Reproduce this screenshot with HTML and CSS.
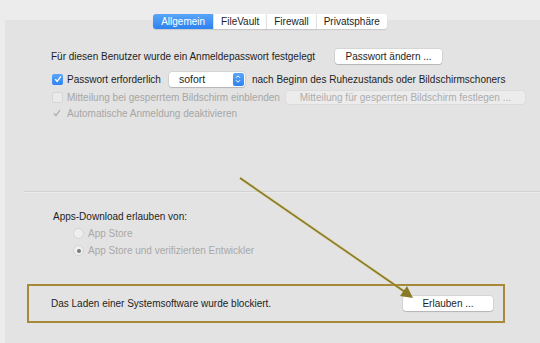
FILE: index.html
```html
<!DOCTYPE html>
<html>
	<head>
		<meta charset="utf-8">
		<title>Sicherheit</title>
		<link rel="stylesheet" href="styles.css">
	</head>
	<body>
		<div class="tabs">
			<div class="tab current">Allgemein</div>
			<div class="tab">FileVault</div>
			<div class="tab">Firewall</div>
			<div class="tab">Privatsphäre</div>
		</div>
		<div class="panel">
			<div class="row row-first">
				<span>Für diesen Benutzer wurde ein Anmeldepasswort festgelegt</span>
				<div class="btn btn-pass">Passwort ändern ...</div>
			</div>
			<div class="row row-second">
				<span class="check on">
					<svg width="8" height="8" viewBox="0 0 8 8"><polyline points="1.2,4.2 3.2,6.3 6.8,1.4" fill="none" stroke="#fff" stroke-width="1.4"/></svg>
				</span>
				<span>Passwort erforderlich</span>
				<div class="popup">
					<span>sofort</span>
					<span class="stepper">
						<svg width="6" height="10" viewBox="0 0 6 10"><polyline points="1,3.8 3,1.8 5,3.8" fill="none" stroke="#fff" stroke-width="1"/><polyline points="1,6.2 3,8.2 5,6.2" fill="none" stroke="#fff" stroke-width="1"/></svg>
					</span>
				</div>
				<span>nach Beginn des Ruhezustands oder Bildschirmschoners</span>
			</div>
			<div class="row muted">
				<span class="check off"></span>
				<span>Mitteilung bei gesperrtem Bildschirm einblenden</span>
				<div class="btn btn-off">Mitteilung für gesperrten Bildschirm festlegen ...</div>
			</div>
			<div class="row row-fourth muted">
				<span class="tick">
					<svg width="10" height="10" viewBox="0 0 10 10"><polyline points="2,5.3 4,7.6 8,2" fill="none" stroke="#a6a6a6" stroke-width="1.1"/></svg>
				</span>
				<span>Automatische Anmeldung deaktivieren</span>
			</div>

			<div class="divider"></div>

			<div class="apps">
				<div class="apps-title">Apps-Download erlauben von:</div>
				<div class="radio-row radio-first">
					<span class="radio"></span>
					<span>App Store</span>
				</div>
				<div class="radio-row">
					<span class="radio"><span class="dot"></span></span>
					<span>App Store und verifizierten Entwickler</span>
				</div>
			</div>

			<div class="blocked">
				<span>Das Laden einer Systemsoftware wurde blockiert.</span>
				<div class="btn btn-allow">Erlauben ...</div>
			</div>
		</div>

		<svg class="arrow" width="540" height="343" viewBox="0 0 540 343">
			<line x1="240" y1="178" x2="405" y2="292" stroke="#d8c970" stroke-width="3" stroke-opacity="0.45"/>
			<line x1="240" y1="178" x2="405" y2="292" stroke="#8a7a26" stroke-width="1.6"/>
			<polygon points="413,298 400,296 407,286" fill="#8a7a26"/>
		</svg>
	</body>
</html>
```

FILE: styles.css
```css
*{
	padding: 0;
	margin: 0;
	box-sizing: border-box;
}
body{
	width: 540px;
	height: 343px;
	overflow: hidden;
	background-color: #ececec;
	font-family: "Liberation Sans", Arial, sans-serif;
	font-size: 10px;
	color: #1e1e1e;
	position: relative;
}
.tabs{
	position: relative;
	z-index: 1;
	display: flex;
	justify-content: center;
	padding-top: 14px;
}
.tab{
	height: 15px;
	line-height: 15px;
	padding: 0 7px;
	background-color: #fff;
	border-left: 1px solid #e2e2e2;
	box-shadow: 0 1px 1px rgba(0,0,0,0.12);
}
.tab:first-child{
	border-left: none;
	border-radius: 3px 0 0 3px;
}
.tab:last-child{
	border-radius: 0 3px 3px 0;
}
.tab.current{
	color: #fff;
	background: linear-gradient(#5aa5f8, #2d82f0);
	padding: 0 8px;
}
.panel{
	margin-top: -9px;
	margin-left: 5px;
	height: 332px;
	background-color: #e3e3e3;
	padding-top: 27px;
}
.row{
	display: flex;
	align-items: center;
	height: 18px;
	padding-left: 46px;
	white-space: nowrap;
}
.row-second{
	margin-top: 5px;
}
.row-fourth{
	height: 14px;
}
.muted{
	color: #a6a6a6;
}
.btn{
	height: 15px;
	line-height: 15px;
	text-align: center;
	background-color: #fff;
	border-radius: 3px;
	box-shadow: 0 0 0 0.5px rgba(0,0,0,0.12), 0 1px 1px rgba(0,0,0,0.15);
	color: #1e1e1e;
}
.btn-pass{
	width: 107px;
	margin-left: 20px;
}
.btn-off{
	width: 239px;
	margin-left: 6px;
	height: 13px;
	line-height: 13px;
	background-color: #ececec;
	color: #acacac;
	box-shadow: 0 0 0 0.5px rgba(0,0,0,0.06);
}
.check{
	width: 11px;
	height: 11px;
	border-radius: 2px;
	margin: 0 4px 0 1px;
	display: flex;
	align-items: center;
	justify-content: center;
}
.check.on{
	background: linear-gradient(#5aa6fa, #2f83f2);
}
.check.off{
	background-color: #eaeaea;
	border: 1px solid #d6d6d6;
}
.tick{
	width: 11px;
	margin: 0 4px 0 1px;
	display: flex;
}
.popup{
	width: 76px;
	height: 15px;
	margin: 0 7px 0 8px;
	padding-left: 10px;
	background-color: #fff;
	border-radius: 3px;
	box-shadow: 0 0 0 0.5px rgba(0,0,0,0.12), 0 1px 1px rgba(0,0,0,0.15);
	display: flex;
	align-items: center;
	justify-content: space-between;
}
.popup span{
	font-size: 10.5px;
}
.stepper{
	width: 11px;
	height: 13px;
	margin-right: 1px;
	border-radius: 2px;
	background: linear-gradient(#5aa6fa, #2f83f2);
	display: flex;
	align-items: center;
	justify-content: center;
}
.divider{
	margin-top: 71px;
	margin-left: 19px;
	height: 2px;
	background-color: #d2d2d2;
	border-bottom: 1px solid #ebebeb;
}
.apps{
	padding-left: 48px;
	margin-top: 17px;
}
.apps-title{
	height: 14px;
	line-height: 14px;
}
.radio-row{
	display: flex;
	align-items: center;
	height: 17px;
	padding-left: 20px;
	color: #a9a9a9;
}
.radio-first{
	margin-top: 1px;
}
.radio{
	width: 11px;
	height: 11px;
	border-radius: 50%;
	background-color: #eeeeee;
	border: 1px solid #d4d4d4;
	margin-right: 4px;
	display: flex;
	align-items: center;
	justify-content: center;
}
.dot{
	width: 4px;
	height: 4px;
	border-radius: 50%;
	background-color: #7a7a7a;
}
.blocked{
	margin-top: 25px;
	margin-left: 22px;
	width: 478px;
	height: 39px;
	border: 2px solid #a68a3a;
	display: flex;
	align-items: center;
	justify-content: space-between;
	padding: 0 10px 0 22px;
}
.btn-allow{
	width: 90px;
	height: 15px;
}
.arrow{
	position: absolute;
	left: 0;
	top: 0;
	pointer-events: none;
}
```
